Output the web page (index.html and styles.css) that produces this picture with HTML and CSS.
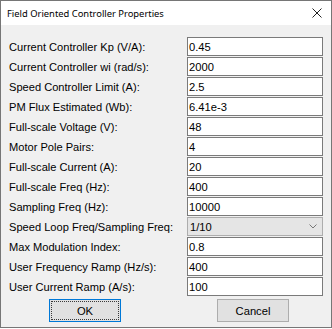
FILE: index.html
```html
<!DOCTYPE html>
<html>
<head>
<meta charset="utf-8">
<link rel="stylesheet" href="styles.css">
</head>
<body>
<div class="window">
  <div class="titlebar">
    <span class="title">Field Oriented Controller Properties</span>
    <svg class="close" width="10" height="10" viewBox="0 0 10 10"><path d="M0.5 0.5L9.5 9.5M9.5 0.5L0.5 9.5" stroke="#222" stroke-width="1"/></svg>
  </div>
  <div class="content">
    <div class="form">
      <label>Current Controller Kp (V/A):</label><div class="field">0.45</div>
      <label>Current Controller wi (rad/s):</label><div class="field">2000</div>
      <label>Speed Controller Limit (A):</label><div class="field">2.5</div>
      <label>PM Flux Estimated (Wb):</label><div class="field">6.41e-3</div>
      <label>Full-scale Voltage (V):</label><div class="field">48</div>
      <label>Motor Pole Pairs:</label><div class="field">4</div>
      <label>Full-scale Current (A):</label><div class="field">20</div>
      <label>Full-scale Freq (Hz):</label><div class="field">400</div>
      <label>Sampling Freq (Hz):</label><div class="field">10000</div>
      <label>Speed Loop Freq/Sampling Freq:</label><div class="field combo"><span>1/10</span><svg width="8" height="5" viewBox="0 0 8 5"><path d="M0.5 0.5L4 4L7.5 0.5" stroke="#777" fill="none" stroke-width="1"/></svg></div>
      <label>Max Modulation Index:</label><div class="field">0.8</div>
      <label>User Frequency Ramp (Hz/s):</label><div class="field">400</div>
      <label>User Current Ramp (A/s):</label><div class="field">100</div>
    </div>
    <div class="buttons">
      <button class="btn ok"><span class="focus">OK</span></button>
      <button class="btn cancel">Cancel</button>
    </div>
  </div>
</div>
</body>
</html>
```
FILE: styles.css
```css
html, body {
  margin: 0;
  padding: 0;
  background: #ffffff;
}
body {
  width: 332px;
  height: 329px;
  overflow: hidden;
}
.window {
  width: 332px;
  height: 328px;
  box-sizing: border-box;
  border: 1px solid #767676;
  background: #f0f0f0;
  display: flex;
  flex-direction: column;
}
.titlebar {
  height: 24px;
  background: #ffffff;
  display: flex;
  align-items: center;
  justify-content: space-between;
  padding: 0 9px 0 6px;
}
.title {
  font-family: "Noto Sans", sans-serif;
  font-size: 9.4px;
  color: #000;
}
.close {
  display: block;
}
.content {
  padding: 12px 8px 0 7px;
}
.form {
  display: grid;
  grid-template-columns: 179px 136px;
  grid-auto-rows: 19px;
  row-gap: 1px;
}
.form label {
  font-family: "Liberation Sans", Arial, sans-serif;
  font-size: 11.1px;
  color: #000;
  display: flex;
  align-items: center;
  padding-left: 1px;
}
.field {
  box-sizing: border-box;
  border: 1px solid #7a7a7a;
  background: #fff;
  font-family: "Liberation Sans", Arial, sans-serif;
  font-size: 11.2px;
  color: #000;
  display: flex;
  align-items: center;
  padding-left: 1px;
}
.combo {
  background: #e5e5e5;
  border-color: #adadad;
  justify-content: space-between;
  padding-right: 5px;
  padding-left: 2px;
}
.combo svg {
  display: block;
}
.buttons {
  display: flex;
  margin-top: 3px;
  padding-left: 41px;
  gap: 96px;
}
.btn {
  box-sizing: border-box;
  width: 72px;
  height: 23px;
  background: #e1e1e1;
  border: 1px solid #adadad;
  font-family: "Liberation Sans", Arial, sans-serif;
  font-size: 11.2px;
  color: #000;
  padding: 0;
  margin: 0;
}
.ok {
  border: 1px solid #0078d7;
  padding: 1px;
}
.focus {
  display: flex;
  align-items: center;
  justify-content: center;
  width: 100%;
  height: 100%;
  box-sizing: border-box;
  border: 1px dotted #3a3a3a;
}
```
